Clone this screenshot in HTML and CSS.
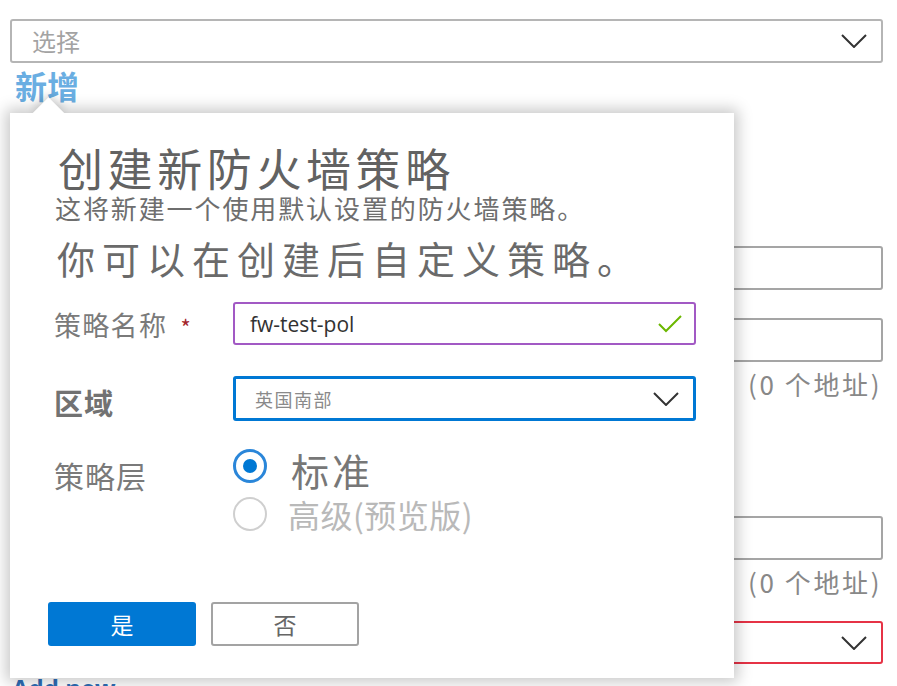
FILE: index.html
```html
<!DOCTYPE html>
<html lang="zh-CN">
<head>
<meta charset="utf-8">
<title>创建新防火墙策略</title>
<link rel="stylesheet" href="styles.css">
</head>
<body>
<div class="page">
  <div class="select top-select">
    <span class="placeholder">选择</span>
    <svg class="chev" width="26" height="14" viewBox="0 0 26 14"><path d="M1 1 L13 13 L25 1" fill="none" stroke="#333" stroke-width="2"/></svg>
  </div>
  <a class="add-link">新增</a>

  <div class="bg-fields">
    <div class="bg-input f1"></div>
    <div class="bg-input f2"></div>
    <div class="bg-note n1">(0 个地址)</div>
    <div class="bg-input f3"></div>
    <div class="bg-note n2">(0 个地址)</div>
    <div class="select red-select">
      <svg class="chev" width="26" height="14" viewBox="0 0 26 14"><path d="M1 1 L13 13 L25 1" fill="none" stroke="#333" stroke-width="2"/></svg>
    </div>
  </div>
  <div class="add-new">Add new</div>

  <div class="callout">
    <div class="beak"></div>
    <div class="callout-body">
      <h1 class="title">创建新防火墙策略</h1>
      <p class="subtitle">这将新建一个使用默认设置的防火墙策略。</p>
      <p class="hint">你可以在创建后自定义策略。</p>

      <div class="row row-name">
        <label class="label">策略名称 <span class="req">*</span></label>
        <div class="input name-input">
          <span class="value">fw-test-pol</span>
          <svg width="24" height="18" viewBox="0 0 24 18"><path d="M1 9 L8 16 L23 1" fill="none" stroke="#6bb700" stroke-width="2"/></svg>
        </div>
      </div>

      <div class="row row-region">
        <label class="label label-bold">区域</label>
        <div class="input region-select">
          <span class="value-sm">英国南部</span>
          <svg width="26" height="14" viewBox="0 0 26 14"><path d="M1 1 L13 13 L25 1" fill="none" stroke="#333" stroke-width="2"/></svg>
        </div>
      </div>

      <div class="row row-tier">
        <label class="label label-tier">策略层</label>
        <div class="radios">
          <div class="radio-opt">
            <span class="radio checked"></span>
            <span class="radio-text std">标准</span>
          </div>
          <div class="radio-opt">
            <span class="radio"></span>
            <span class="radio-text adv">高级(预览版)</span>
          </div>
        </div>
      </div>

      <div class="buttons">
        <button class="btn primary">是</button>
        <button class="btn secondary">否</button>
      </div>
    </div>
  </div>
</div>
</body>
</html>
```
FILE: styles.css
```css
* { box-sizing: border-box; }
html, body { margin: 0; padding: 0; background: #fff; }
body {
  font-family: "Noto Sans CJK SC", "Noto Sans", sans-serif;
  width: 897px;
  height: 686px;
  overflow: hidden;
}
.page {
  position: relative;
  width: 897px;
  height: 686px;
  padding: 19px 14px 0 10px;
}
.select {
  display: flex;
  align-items: center;
  justify-content: space-between;
  border: 2px solid #b5b5b5;
  border-radius: 3px;
  background: #fff;
}
.top-select {
  height: 44px;
  width: 873px;
  padding: 0 14px 0 20px;
}
.placeholder {
  font-size: 24px;
  color: #a3a3a3;
  line-height: 1;
}
.add-link {
  display: block;
  margin: 3px 0 0 5px;
  font-size: 32px;
  line-height: 38px;
  font-weight: 700;
  color: #6aaee2;
  letter-spacing: 0;
}
.bg-fields {
  display: flex;
  flex-direction: column;
  align-items: flex-end;
  margin-top: 142px;
  width: 873px;
}
.bg-input {
  width: 420px;
  height: 44px;
  border: 2px solid #a5a5a5;
  border-radius: 3px;
}
.f2 { margin-top: 28px; }
.bg-note {
  font-size: 26px;
  line-height: 30px;
  color: #888;
  margin-top: 7px;
  width: 135px;
  white-space: nowrap;
  letter-spacing: 2.6px;
}
.f3 { margin-top: 117px; }
.red-select {
  width: 420px;
  height: 43px;
  border-color: #e63346;
  margin-top: 24px;
  justify-content: flex-end;
  padding-right: 14px;
}
.add-new {
  margin: 12px 0 0 2px;
  font-size: 24px;
  line-height: 24px;
  font-weight: 700;
  color: #2d6db5;
  font-family: "Open Sans", sans-serif;
}

.callout {
  position: absolute;
  left: 10px;
  top: 113px;
  width: 724px;
  height: 565px;
  background: #fff;
  box-shadow: 0 0 14px 4px rgba(0,0,0,0.22);
}
.beak {
  position: absolute;
  left: 27px;
  top: -11px;
  width: 23px;
  height: 23px;
  background: #fff;
  transform: rotate(45deg);
  box-shadow: -3px -3px 8px rgba(0,0,0,0.15);
}
.callout-body {
  position: relative;
  background: #fff;
  height: 100%;
  padding: 32px 0 0 44px;
  display: flex;
  flex-direction: column;
}
.title {
  margin: 0 0 0 4px;
  font-size: 45px;
  line-height: 45px;
  font-weight: 400;
  letter-spacing: 4.6px;
  color: #626262;
}
.subtitle {
  margin: 5px 0 0 1px;
  font-size: 26px;
  line-height: 26px;
  letter-spacing: 1.9px;
  color: #6e6e6e;
}
.hint {
  margin: 18px 0 0 3px;
  font-size: 38px;
  line-height: 38px;
  letter-spacing: 7px;
  color: #6a6a6a;
}
.row {
  display: flex;
  align-items: flex-start;
}
.label {
  width: 179px;
  flex: none;
  color: #7a7a7a;
  font-size: 27px;
  line-height: 30px;
  letter-spacing: 1.3px;
}
.req { color: #a4262c; font-size: 22px; margin-left: 6px; }
.row-name { margin-top: 25px; }
.row-name .label { padding-top: 8px; }
.input {
  display: flex;
  align-items: center;
  justify-content: space-between;
  width: 463px;
  border-radius: 3px;
  background: #fff;
}
.name-input {
  height: 43px;
  border: 2px solid #a259c4;
  padding: 0 12px 0 15px;
}
.value {
  font-family: "Open Sans", "Noto Sans", sans-serif;
  font-size: 21px;
  color: #323232;
}
.row-region { margin-top: 31px; }
.row-region .label { padding-top: 11px; }
.label-bold { font-weight: 700; font-size: 29px; letter-spacing: 1px; color: #727272; }
.region-select {
  height: 45px;
  border: 3px solid #0078d4;
  padding: 0 14px 0 19px;
}
.value-sm {
  font-size: 18px;
  color: #8a8a8a;
  letter-spacing: 1.5px;
}
.row-tier { margin-top: 28px; }
.label-tier { padding-top: 11px; font-size: 30px; letter-spacing: 1px; }
.radios {
  display: flex;
  flex-direction: column;
  gap: 14px;
}
.radio-opt {
  display: flex;
  align-items: center;
  height: 34px;
}
.radio {
  width: 34px;
  height: 34px;
  border-radius: 50%;
  border: 2px solid #cfcfcf;
  flex: none;
  position: relative;
}
.radio.checked { border: 3px solid #2a86d9; }
.radio.checked::after {
  content: "";
  position: absolute;
  left: 50%;
  top: 50%;
  width: 14px;
  height: 14px;
  margin: -7px 0 0 -7px;
  border-radius: 50%;
  background: #0078d4;
}
.radio-text.std {
  margin-left: 24px;
  font-size: 38px;
  line-height: 32px;
  letter-spacing: 3px;
  color: #777;
  position: relative;
  top: 4px;
}
.radio-text.adv {
  margin-left: 21px;
  font-size: 32px;
  line-height: 34px;
  letter-spacing: 0.5px;
  color: #b9b9b9;
}
.buttons {
  display: flex;
  gap: 15px;
  margin: 71px 0 0 -6px;
}
.btn {
  width: 148px;
  height: 44px;
  border-radius: 3px;
  font-family: "Noto Sans CJK SC", sans-serif;
  font-size: 23px;
  cursor: pointer;
}
.primary {
  background: #0078d4;
  color: #fff;
  border: none;
}
.secondary {
  background: #fff;
  color: #666;
  border: 2px solid #a3a3a3;
}
```
